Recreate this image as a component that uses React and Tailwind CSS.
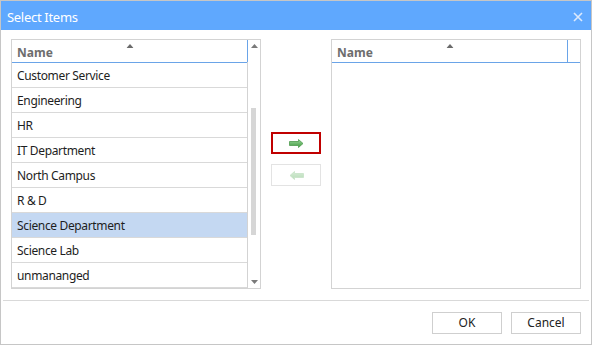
import React, { useState } from 'react';

const leftItems = [
  'Customer Service',
  'Engineering',
  'HR',
  'IT Department',
  'North Campus',
  'R & D',
  'Science Department',
  'Science Lab',
  'unmananged',
];

const SortArrow = () => (
  <svg width="7" height="4" viewBox="0 0 7 4" className="absolute top-[4px] left-1/2 -translate-x-1/2">
    <path d="M3.5 0 L7 4 L0 4 Z" fill="#6b6b6b" />
  </svg>
);

const HeaderCell = () => (
  <div className="relative w-[236px] h-[22px] border-r border-[#6aa4e8] flex items-end pl-[5px] pb-[1px]">
    <SortArrow />
    <span className="text-[12px] font-bold text-[#6d6d6d] leading-[16px]">Name</span>
  </div>
);

const ArrowIcon = ({ dir, faded }) => (
  <svg width="15" height="9" viewBox="0 0 15 9">
    <defs>
      <linearGradient id={`g-${dir}`} x1="0" y1="0" x2="0" y2="1">
        <stop offset="0" stopColor={faded ? '#d6ecd6' : '#9bd69b'} />
        <stop offset="1" stopColor={faded ? '#b9dcb9' : '#3f9a3f'} />
      </linearGradient>
    </defs>
    <g transform={dir === 'left' ? 'translate(15,0) scale(-1,1)' : undefined}>
      <path
        d="M0.5 2.5 H9.5 V0.5 L14 4.5 L9.5 8.5 V6.5 H0.5 Z"
        fill={`url(#g-${dir})`}
        stroke={faded ? '#c6e2c6' : '#4e9a4e'}
        strokeWidth="0.8"
      />
    </g>
  </svg>
);

export default function App() {
  const [selected, setSelected] = useState('Science Department');

  return (
    <div
      className="w-[592px] h-[345px] bg-white border border-[#c6c6c6] flex flex-col overflow-hidden"
      style={{ fontFamily: '"Segoe UI", "Noto Sans", sans-serif' }}
    >
      <div className="h-[29px] bg-[#5fa8fe] flex items-center justify-between pl-[6px] pr-[8px] pt-[3px] shrink-0">
        <span className="text-white text-[13px] tracking-[-0.3px] leading-none">Select Items</span>
        <svg width="10" height="10" viewBox="0 0 10 10">
          <path d="M1 1 L9 9 M9 1 L1 9" stroke="#dce9fb" strokeWidth="1.6" />
        </svg>
      </div>

      <div className="flex pt-[9px] pl-[10px] h-[259px]">
        <div className="w-[250px] h-[250px] border border-[#d3d3d3] flex">
          <div className="w-[236px] flex flex-col border-r border-[#d3d3d3]">
            <div className="border-b border-[#6aa4e8]">
              <HeaderCell />
            </div>
            <div className="flex-1 overflow-hidden">
              {leftItems.map((item) => (
                <div
                  key={item}
                  onClick={() => setSelected(item)}
                  className={`h-[25px] flex items-center pl-[5px] pt-[1px] border-b border-[#d9d9d9] text-[12px] tracking-[-0.35px] text-[#1e1e1e] ${
                    selected === item ? 'bg-[#c4d8f2]' : 'bg-white'
                  }`}
                >
                  {item}
                </div>
              ))}
            </div>
          </div>
          <div className="w-[12px] flex flex-col items-center justify-between py-[4px] relative">
            <svg width="7" height="4" viewBox="0 0 7 4">
              <path d="M3.5 0 L7 4 L0 4 Z" fill="#7a7a7a" />
            </svg>
            <div className="absolute left-[3px] top-[68px] w-[5px] h-[127px] bg-[#d6d6d6]" />
            <svg width="7" height="4" viewBox="0 0 7 4">
              <path d="M0 0 L7 0 L3.5 4 Z" fill="#7a7a7a" />
            </svg>
          </div>
        </div>

        <div className="w-[70px] flex flex-col items-center pt-[93px] gap-[10px]">
          <button className="w-[50px] h-[22px] border-2 border-[#c00000] bg-white flex items-center justify-center">
            <ArrowIcon dir="right" />
          </button>
          <button className="w-[50px] h-[22px] border border-[#e3e3e3] bg-white flex items-center justify-center">
            <ArrowIcon dir="left" faded />
          </button>
        </div>

        <div className="w-[250px] h-[250px] border border-[#d3d3d3] flex flex-col">
          <div className="flex border-b border-[#6aa4e8]">
            <HeaderCell />
          </div>
        </div>
      </div>

      <div className="mx-[2px] mt-[11px] border-t border-[#d9d9d9]" />

      <div className="flex justify-end gap-[9px] pr-[10px] pt-[11px]">
        <button className="w-[70px] h-[22px] border border-[#cfcfcf] bg-white text-[12px] text-[#222]">OK</button>
        <button className="w-[70px] h-[22px] border border-[#cfcfcf] bg-white text-[12px] text-[#222]">Cancel</button>
      </div>
    </div>
  );
}
